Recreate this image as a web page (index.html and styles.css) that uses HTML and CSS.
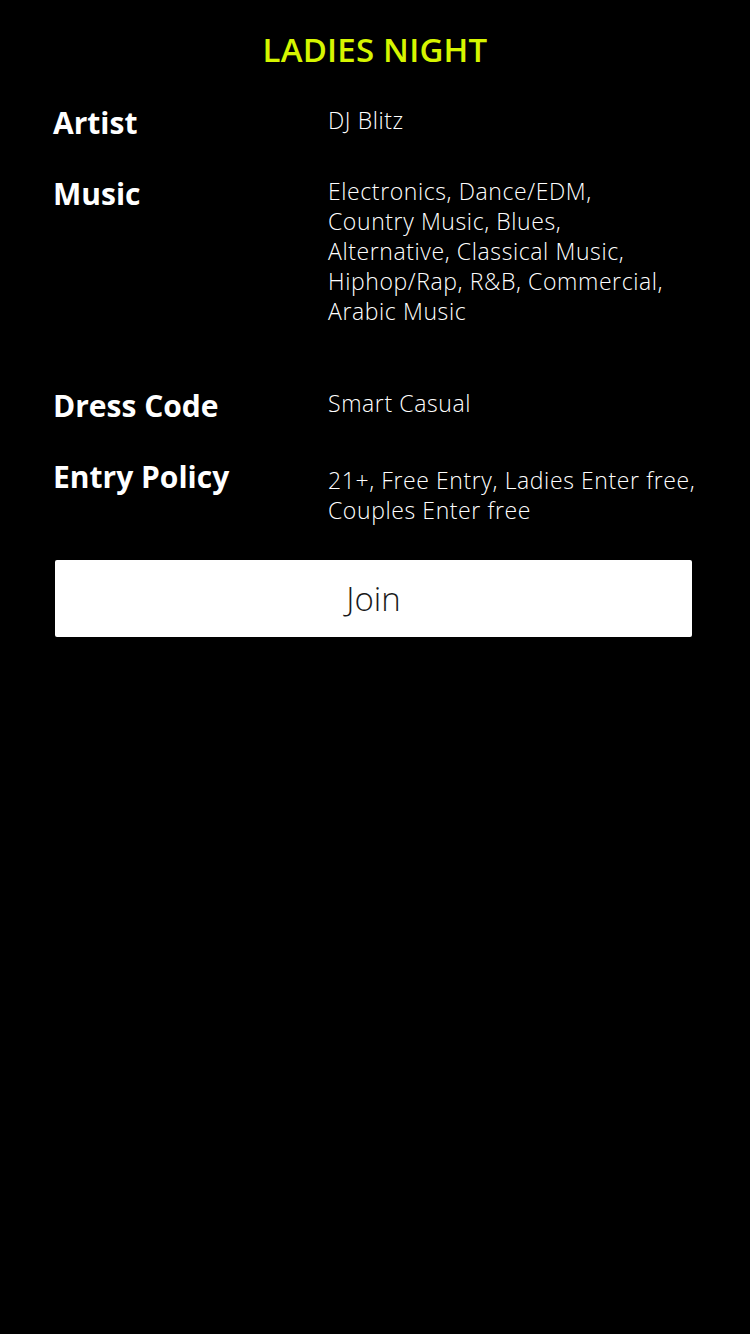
FILE: index.html
```html
<!DOCTYPE html>
<html lang="en">
<head>
    <meta charset="UTF-8">
    <meta name="viewport" content="width=device-width, initial-scale=1.0">
    <title>Ladies Night</title>
    <link rel="stylesheet" href="styles.css">
</head>
<body>

<div class="container">
    <h1 class="title">LADIES NIGHT</h1>

    <div class="details">
        <div class="row">
            <div class="label">Artist</div>
            <div class="value">DJ Blitz</div>
        </div>
        <div class="row row-music">
            <div class="label">Music</div>
            <div class="value">Electronics, Dance/EDM,<br>Country Music, Blues,<br>Alternative, Classical Music,<br>Hiphop/Rap, R&amp;B, Commercial,<br>Arabic Music</div>
        </div>
        <div class="row">
            <div class="label">Dress Code</div>
            <div class="value">Smart Casual</div>
        </div>
        <div class="row row-policy">
            <div class="label">Entry Policy</div>
            <div class="value">21+, Free Entry, Ladies Enter free,<br>Couples Enter free</div>
        </div>
    </div>

    <button class="join-btn" type="button">Join</button>
</div>

</body>
</html>
```

FILE: styles.css
```css
* {
    margin: 0;
    padding: 0;
    box-sizing: border-box;
}
body {
    font-family: 'Open Sans', 'Noto Sans', sans-serif;
    background-color: #000;
    color: #fff;
    width: 750px;
    height: 1334px;
}
.container {
    padding: 31px 58px 0 53px;
}
.title {
    text-align: center;
    color: #d6f500;
    font-size: 33px;
    font-weight: 600;
    line-height: 38px;
    letter-spacing: 0.2px;
    margin-bottom: 36px;
    padding-left: 5px;
}
.row {
    display: flex;
    align-items: flex-start;
    margin-bottom: 35px;
}
.row-music {
    margin-bottom: 62px;
}
.label {
    width: 275px;
    flex-shrink: 0;
    font-size: 30px;
    font-weight: 700;
    line-height: 36px;
    letter-spacing: 0;
}
.value {
    font-size: 23px;
    font-weight: 300;
    line-height: 30px;
    letter-spacing: 0.6px;
    white-space: nowrap;
}
.row-policy .value {
    padding-top: 6px;
}
.join-btn {
    display: block;
    width: 637px;
    height: 77px;
    margin: 0 0 0 2px;
    background-color: #fff;
    color: #1a1a1a;
    border: none;
    border-radius: 2px;
    font-family: 'Open Sans', 'Noto Sans', sans-serif;
    font-size: 33px;
    font-weight: 300;
    cursor: pointer;
}
```
